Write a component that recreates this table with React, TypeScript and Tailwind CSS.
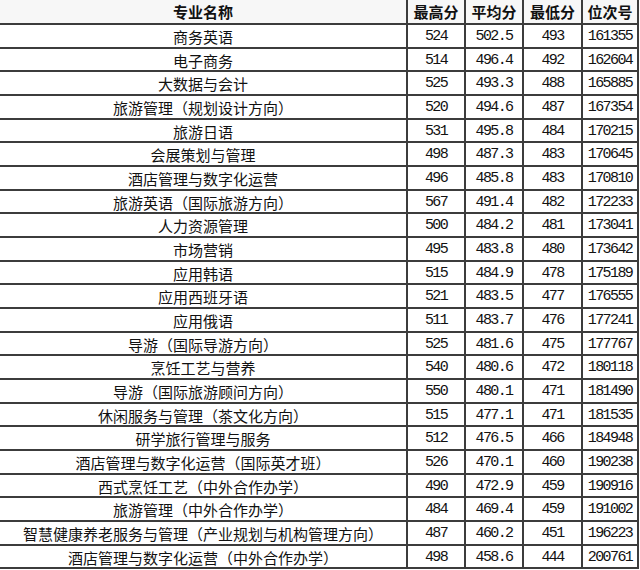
const rows: [string, string, string, string, string][] = [
  ["商务英语", "524", "502.5", "493", "161355"],
  ["电子商务", "514", "496.4", "492", "162604"],
  ["大数据与会计", "525", "493.3", "488", "165885"],
  ["旅游管理（规划设计方向）", "520", "494.6", "487", "167354"],
  ["旅游日语", "531", "495.8", "484", "170215"],
  ["会展策划与管理", "498", "487.3", "483", "170645"],
  ["酒店管理与数字化运营", "496", "485.8", "483", "170810"],
  ["旅游英语（国际旅游方向）", "567", "491.4", "482", "172233"],
  ["人力资源管理", "500", "484.2", "481", "173041"],
  ["市场营销", "495", "483.8", "480", "173642"],
  ["应用韩语", "515", "484.9", "478", "175189"],
  ["应用西班牙语", "521", "483.5", "477", "176555"],
  ["应用俄语", "511", "483.7", "476", "177241"],
  ["导游（国际导游方向）", "525", "481.6", "475", "177767"],
  ["烹饪工艺与营养", "540", "480.6", "472", "180118"],
  ["导游（国际旅游顾问方向）", "550", "480.1", "471", "181490"],
  ["休闲服务与管理（茶文化方向）", "515", "477.1", "471", "181535"],
  ["研学旅行管理与服务", "512", "476.5", "466", "184948"],
  ["酒店管理与数字化运营（国际英才班）", "526", "470.1", "460", "190238"],
  ["西式烹饪工艺（中外合作办学）", "490", "472.9", "459", "190916"],
  ["旅游管理（中外合作办学）", "484", "469.4", "459", "191002"],
  ["智慧健康养老服务与管理（产业规划与机构管理方向）", "487", "460.2", "451", "196223"],
  ["酒店管理与数字化运营（中外合作办学）", "498", "458.6", "444", "200761"],
];

const cjk = { fontFamily: '"Noto Sans CJK SC", "Noto Sans", sans-serif' };
const mono = { fontFamily: '"Liberation Mono", "Noto Sans CJK SC", monospace' };

export default function App() {
  return (
    <div className="w-[640px] h-[570px] bg-white overflow-hidden text-[#111]">
      <div className="w-[639px] flex flex-col">
        <div className="flex h-[25px] border-b-2 border-[#3c3c3c] bg-[#f7f7f7]" style={cjk}>
          <div className="w-[408px] border-r-2 border-[#3c3c3c] flex items-center justify-center text-[15px] font-bold leading-none">专业名称</div>
          <div className="w-[58px] border-r-2 border-[#3c3c3c] flex items-center justify-center text-[15px] font-bold leading-none">最高分</div>
          <div className="w-[58px] border-r-2 border-[#3c3c3c] flex items-center justify-center text-[15px] font-bold leading-none">平均分</div>
          <div className="w-[59px] border-r-2 border-[#3c3c3c] flex items-center justify-center text-[15px] font-bold leading-none">最低分</div>
          <div className="w-[56px] border-r-2 border-[#3c3c3c] flex items-center justify-center text-[15px] font-bold leading-none">位次号</div>
        </div>
        {rows.map((r, i) => (
          <div key={i} className="flex h-[23.68px] border-b-2 border-[#3c3c3c]">
            <div className="w-[408px] border-r-2 border-[#3c3c3c] flex items-center justify-center text-[15px] leading-none whitespace-nowrap pt-[1px]" style={cjk}>{r[0]}</div>
            <div className="w-[58px] border-r-2 border-[#3c3c3c] flex items-center justify-center text-[15px] leading-none tracking-[-1.6px] pt-[1px]" style={mono}>{r[1]}</div>
            <div className="w-[58px] border-r-2 border-[#3c3c3c] flex items-center justify-center text-[15px] leading-none tracking-[-1.6px] pt-[1px]" style={mono}>{r[2]}</div>
            <div className="w-[59px] border-r-2 border-[#3c3c3c] flex items-center justify-center text-[15px] leading-none tracking-[-1.6px] pt-[1px]" style={mono}>{r[3]}</div>
            <div className="w-[56px] border-r-2 border-[#3c3c3c] flex items-center justify-center text-[15px] leading-none tracking-[-1.6px] pt-[1px]" style={mono}>{r[4]}</div>
          </div>
        ))}
      </div>
    </div>
  );
}
